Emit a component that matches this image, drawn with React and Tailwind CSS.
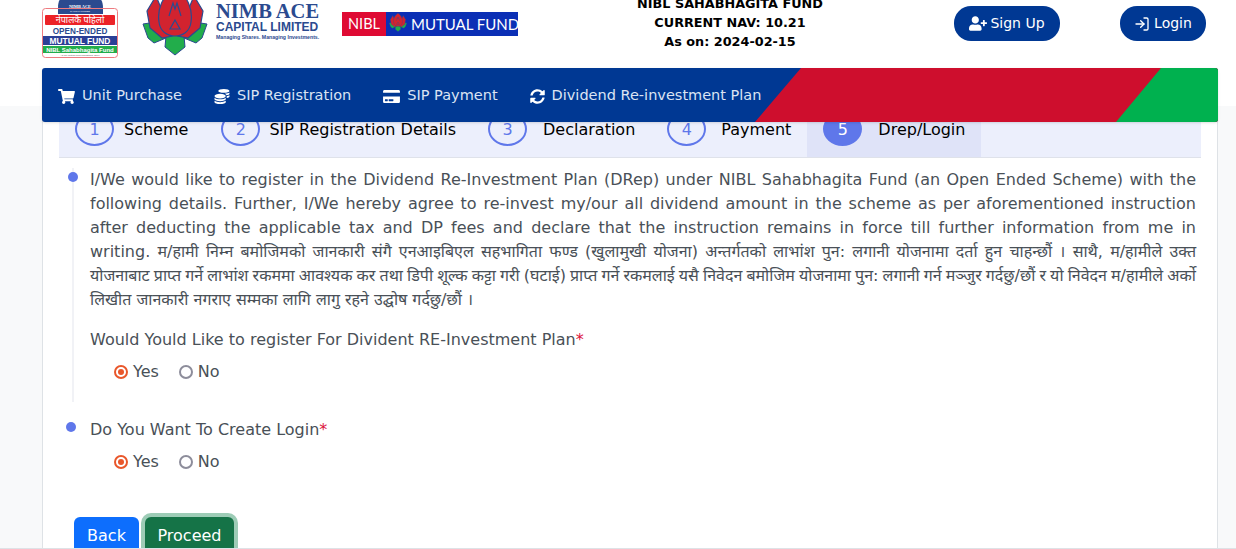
import React from 'react';
import { FaShoppingCart, FaCoins, FaCreditCard, FaSyncAlt, FaUserPlus } from 'react-icons/fa';
import { LogIn } from 'lucide-react';

const navItems = [
  { label: 'Unit Purchase', icon: FaShoppingCart, size: 'w-[17px]' },
  { label: 'SIP Registration', icon: FaCoins, size: 'w-[16px]' },
  { label: 'SIP Payment', icon: FaCreditCard, size: 'w-[17px]' },
  { label: 'Dividend Re-investment Plan', icon: FaSyncAlt, size: 'w-[15px]' },
];

const steps = [
  { n: 1, label: 'Scheme', cls: 'gap-[10px] pl-[16px] pr-[17px]' },
  { n: 2, label: 'SIP Registration Details', cls: 'gap-[9px] px-[16px]' },
  { n: 3, label: 'Declaration', cls: 'gap-[16px] px-[16px]' },
  { n: 4, label: 'Payment', cls: 'gap-[15px] px-[16px]' },
  { n: 5, label: 'Drep/Login', cls: 'gap-[16px] px-[16px] bg-[#dfe3f8]', active: true },
];

// the Devanagari font here is wider than the one in the design, so lines are set by hand
const declarationLines = [
  'writing. म/हामी निम्न बमोजिमको जानकारी संगै एनआइबिएल सहभागिता फण्ड (खुलामुखी योजना) अन्तर्गतको लाभांश पुन: लगानी योजनामा दर्ता हुन चाहन्छौं । साथै, म/हामीले उक्त',
  'योजनाबाट प्राप्त गर्ने लाभांश रकममा आवश्यक कर तथा डिपी शूल्क कट्टा गरी (घटाई) प्राप्त गर्ने रकमलाई यसै निवेदन बमोजिम योजनामा पुन: लगानी गर्न मञ्जुर गर्दछु/छौं र यो निवेदन म/हामीले अर्को',
];

const LotusMark = ({ className }) => (
  <svg viewBox="0 0 66 55" className={className}>
    <path d="M1 24 L14 22 L24 38 L12 43 L6 38 Z" fill="#22ad4b" stroke="#2b4a8f" strokeWidth="1" />
    <path d="M65 24 L52 22 L42 38 L54 43 L60 38 Z" fill="#22ad4b" stroke="#2b4a8f" strokeWidth="1" />
    <path d="M33 55 L23 47 L24 36 L33 33 L42 36 L43 47 Z" fill="#22ad4b" stroke="#2b4a8f" strokeWidth="1" />
    <path d="M5 11 L14 -4 L24 20 L30 36 L20 38 L8 28 Z" fill="#d2232f" stroke="#2b4a8f" strokeWidth="1.2" />
    <path d="M61 11 L52 -4 L42 20 L36 36 L46 38 L58 28 Z" fill="#d2232f" stroke="#2b4a8f" strokeWidth="1.2" />
    <path d="M33 -12 C20 -4 15 10 17 22 C18 32 26 36 33 36 C40 36 48 32 49 22 C51 10 46 -4 33 -12 Z" fill="#d2232f" stroke="#2b4a8f" strokeWidth="1.2" />
    <path d="M27 16 L31 3 L33 9 L35 3 L39 16" fill="none" stroke="#2b4a8f" strokeWidth="1.2" />
    <path d="M33 20 L38 29 L28 29 Z" fill="none" stroke="#2b4a8f" strokeWidth="1.2" />
  </svg>
);

const FundBadge = () => (
  <svg viewBox="0 0 76 58" className="h-[58px] w-[76px] shrink-0">
    <path d="M16 8 C16 -4 22 -6 38 -6 C54 -6 61 -4 61 8 L61 14 L16 14 Z" fill="#2b4a8f" />
    <text x="38" y="8" textAnchor="middle" fontSize="4.4" fontWeight="700" fill="#fff" fontFamily="Liberation Serif, serif">NIMB ACE</text>
    <text x="38" y="12" textAnchor="middle" fontSize="2.4" fill="#fff" fontFamily="Liberation Sans, sans-serif">CAPITAL LIMITED</text>
    <rect x="0.5" y="8.5" width="75" height="49" rx="3" fill="none" stroke="#ee7b80" />
    <rect x="3" y="15" width="70" height="10" rx="1" fill="#ec2227" />
    <text x="38" y="23" textAnchor="middle" fontSize="9" fill="#fff" fontFamily="Noto Sans, sans-serif">नेपालकै पहिलो</text>
    <text x="38" y="33.5" textAnchor="middle" fontSize="8.2" fontWeight="700" fill="#2b4a8f" fontFamily="Liberation Sans, sans-serif">OPEN-ENDED</text>
    <rect x="1" y="36" width="74" height="9" fill="#2b3f96" />
    <text x="38" y="43.5" textAnchor="middle" fontSize="8.4" fontWeight="700" fill="#fff" fontFamily="Liberation Sans, sans-serif">MUTUAL FUND</text>
    <rect x="1" y="46" width="74" height="7" fill="#22ad4b" />
    <text x="38" y="51.6" textAnchor="middle" fontSize="6" fontWeight="700" fill="#fff" fontFamily="Liberation Sans, sans-serif">NIBL Sahabhagita Fund</text>
    <text x="38" y="56" textAnchor="middle" fontSize="2.4" fill="#555" fontFamily="Liberation Sans, sans-serif">As per mutual fund regulations, 2067</text>
  </svg>
);

const Radio = ({ label, checked }) => (
  <label className="flex items-center gap-[5px]">
    <span className={`flex h-[14px] w-[14px] items-center justify-center rounded-full border-2 ${checked ? 'border-[#e9572b]' : 'border-[#8d8d9b]'}`}>
      {checked && <span className="h-[6px] w-[6px] rounded-full bg-[#e9572b]" />}
    </span>
    <span>{label}</span>
  </label>
);

const YesNo = () => (
  <div className="flex gap-[20px] pl-[24px]">
    <Radio label="Yes" checked />
    <Radio label="No" />
  </div>
);

export default function App() {
  return (
    <div className="relative h-[549px] overflow-hidden bg-white font-['DejaVu_Sans','Noto_Sans',sans-serif] text-[#495057]">
      {/* header, page is scrolled so its top is cut off */}
      <header className="flex h-[68px] items-start bg-white pl-[42px]">
        <FundBadge />
        <LotusMark className="ml-[24px] h-[55px] w-[66px] shrink-0 overflow-visible" />
        <div className="ml-[8px] mt-[3px] w-[104px] shrink-0 text-[#2b4a8f]">
          <div className="font-['Liberation_Serif',serif] text-[20.5px] font-bold leading-[17px] whitespace-nowrap">NIMB ACE</div>
          <div className="mt-[2px] font-['Liberation_Sans',sans-serif] text-[12px] font-bold leading-[11px] whitespace-nowrap">CAPITAL LIMITED</div>
          <div className="mt-[1px] font-['Liberation_Sans',sans-serif] text-[5.2px] font-bold leading-[6px] whitespace-nowrap">Managing Shares. Managing Investments.</div>
        </div>
        <div className="ml-[22px] mt-[12px] flex h-[24px] w-[176px] shrink-0 items-center overflow-hidden bg-[#0b2fb5] font-['Lato',sans-serif] text-[14.5px] leading-none text-white">
          <div className="flex h-full w-[44px] shrink-0 items-center justify-center bg-[#df0a33]">NIBL</div>
          <LotusMark className="mx-[3px] h-[18px] w-[18px] shrink-0 overflow-visible" />
          <span className="ml-[1px] whitespace-nowrap text-[15px]">MUTUAL FUND</span>
        </div>
        <div className="ml-[72px] mt-[-6px] w-[280px] shrink-0 text-center text-[12.8px] font-bold leading-[19px] text-black">
          <div>NIBL SAHABHAGITA FUND</div>
          <div>CURRENT NAV: 10.21</div>
          <div>As on: 2024-02-15</div>
        </div>
        <button className="ml-[84px] mt-[6px] flex h-[35px] w-[106px] items-center justify-center gap-[3px] rounded-[17px] bg-[#003893] text-[14px] text-white">
          <FaUserPlus className="h-[15px] w-[18px]" />
          Sign Up
        </button>
        <button className="ml-[60px] mt-[6px] flex h-[35px] w-[86px] items-center justify-center gap-[4px] rounded-[17px] bg-[#003893] text-[14px] text-white">
          <LogIn className="h-[16px] w-[16px]" />
          Login
        </button>
      </header>

      {/* coloured nav bar, sits on top of the card */}
      <nav className="relative z-10 mx-[42px] mr-[18px] flex h-[54px] items-center gap-[32px] overflow-hidden rounded-[3px] bg-[#003893] pl-[16px] text-[14.5px] text-[#dbe4f3] shadow-sm">
        <svg className="absolute inset-0 h-full w-full" viewBox="0 0 1176 54" preserveAspectRatio="none">
          <path d="M713 54 L759 0 H1176 V54 Z" fill="#ce0e2d" />
          <path d="M1074 54 L1119 0 H1176 V54 Z" fill="#00b14f" />
        </svg>
        {navItems.map(({ label, icon: Icon, size }) => (
          <span key={label} className="relative mt-[2px] flex items-center gap-[7px] whitespace-nowrap">
            <Icon className={`h-[15px] ${size} text-white`} />
            {label}
          </span>
        ))}
      </nav>

      <main className="mt-[-16px] h-[443px] bg-[#f8f9fa] px-[18px] pl-[42px]">
        <div className="h-full overflow-hidden border-x border-[#dee2e6] bg-white px-[16px]">
          <div className="flex h-[52px] items-end border-b border-[#dfe2ea] bg-[#eceffc] text-black">
            {steps.map((s) => (
              <div key={s.n} className={`flex h-[51px] items-start pt-[6px] ${s.cls}`}>
                <span className={`flex h-[34px] w-[39px] items-center justify-center rounded-[50%] border-2 border-[#5f77ea] pt-[2px] ${s.active ? 'bg-[#5f77ea] text-white' : 'text-[#5f77ea]'}`}>
                  {s.n}
                </span>
                <span className="mt-[6px] whitespace-nowrap">{s.label}</span>
              </div>
            ))}
          </div>

          {/* timeline items */}
          <section className="relative ml-[13px] mt-[10px] border-l-2 border-[#f1f2f6] pb-[18px] pl-[16px] pr-[5px]">
            <span className="absolute left-[-6px] top-[4px] h-[10px] w-[10px] rounded-full bg-[#5f77ea]" />
            <div className="leading-6">
              <p className="text-justify [text-align-last:justify]">
                I/We would like to register in the Dividend Re-Investment Plan (DRep) under NIBL Sahabhagita Fund (an Open Ended Scheme) with the following details. Further, I/We hereby agree to re-invest my/our all dividend amount in the scheme as per aforementioned instruction after deducting the applicable tax and DP fees and declare that the instruction remains in force till further information from me in
              </p>
              {declarationLines.map((line) => (
                <p key={line} className="whitespace-nowrap text-justify [word-spacing:-1.5px] [text-align-last:justify]">{line}</p>
              ))}
              <p>लिखीत जानकारी नगराए सम्मका लागि लागु रहने उद्घोष गर्दछु/छौं ।</p>
            </div>
            <p className="mt-[16px] leading-6">
              Would Yould Like to register For Divident RE-Investment Plan<span className="text-[#dc143c]">*</span>
            </p>
            <div className="mt-[8px] leading-6">
              <YesNo />
            </div>
          </section>

          <section className="relative ml-[15px] mt-[16px] pl-[16px]">
            <span className="absolute left-[-8px] top-[4px] h-[10px] w-[10px] rounded-full bg-[#5f77ea]" />
            <p className="leading-6">
              Do You Want To Create Login<span className="text-[#dc143c]">*</span>
            </p>
            <div className="mt-[8px] leading-6">
              <YesNo />
            </div>
          </section>

          <div className="ml-[15px] mt-[43px] flex gap-[6px]">
            <button className="h-[38px] w-[65px] rounded-[6px] bg-[#0d6efd] text-white">Back</button>
            <button className="h-[38px] w-[89px] rounded-[6px] bg-[#157347] text-white ring-4 ring-[#9dccb6]">Proceed</button>
          </div>
        </div>
      </main>
      <div className="absolute inset-x-0 bottom-0 h-px bg-[#dee2e6]" />
    </div>
  );
}
